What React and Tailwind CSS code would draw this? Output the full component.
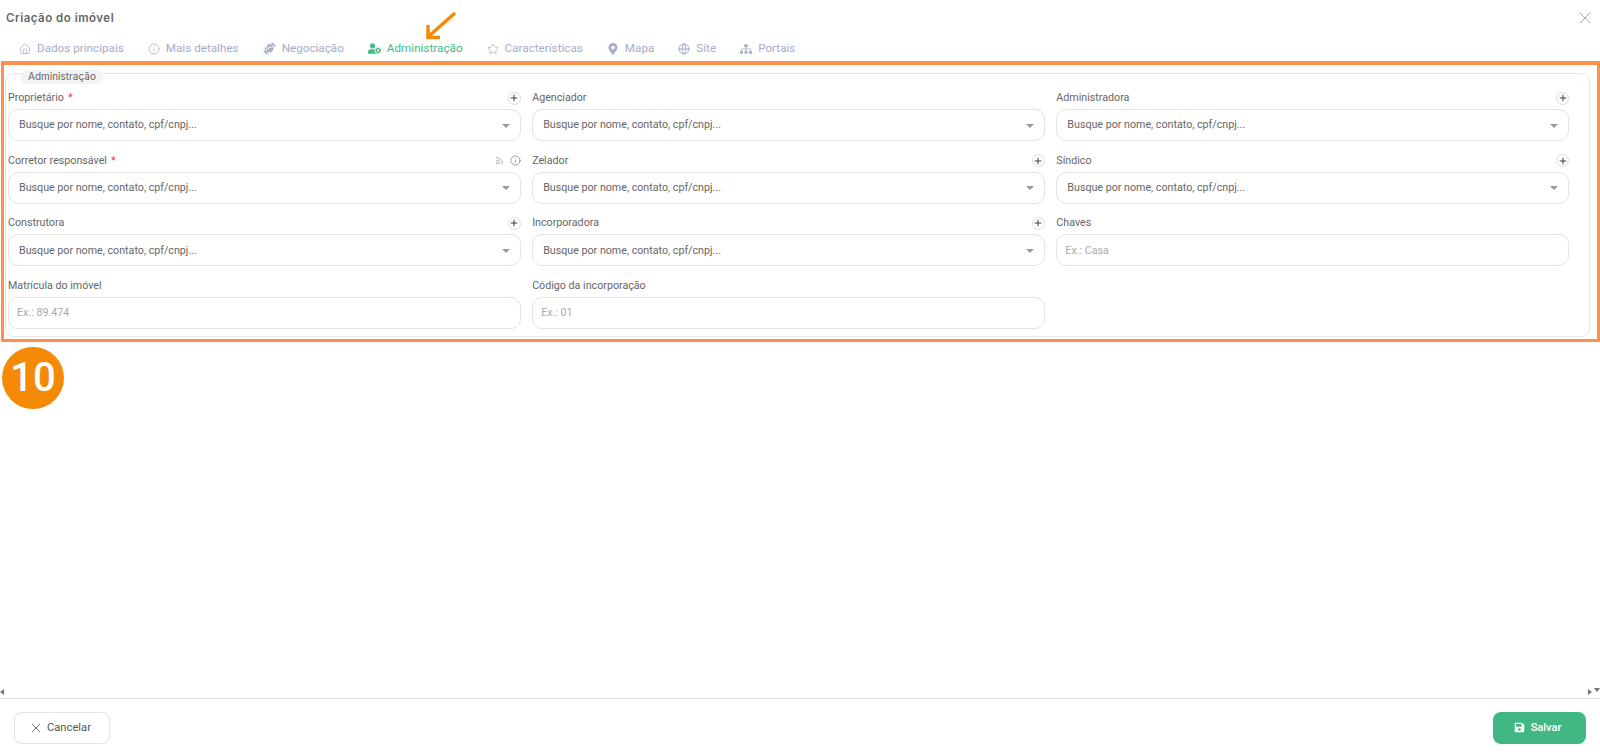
import React from "react";
import { Home, Info, Star, Globe, Plus, Rss, X } from "lucide-react";
import { FaHandshake, FaUserCog, FaMapMarkerAlt, FaSitemap, FaSave } from "react-icons/fa";

const tabs = [
  { label: "Dados principais", icon: <Home className="w-[12px] h-[12px]" strokeWidth={1.5} /> },
  { label: "Mais detalhes", icon: <Info className="w-[12px] h-[12px]" strokeWidth={1.5} /> },
  { label: "Negociação", icon: <FaHandshake className="w-[13px] h-[13px] -rotate-45" /> },
  { label: "Administração", icon: <FaUserCog className="w-[13px] h-[13px]" />, active: true },
  { label: "Características", icon: <Star className="w-[12px] h-[12px]" strokeWidth={1.5} /> },
  { label: "Mapa", icon: <FaMapMarkerAlt className="w-[12px] h-[12px]" /> },
  { label: "Site", icon: <Globe className="w-[12px] h-[12px]" strokeWidth={2} /> },
  { label: "Portais", icon: <FaSitemap className="w-[12px] h-[12px]" /> },
];

const search = "Busque por nome, contato, cpf/cnpj...";

const fields = [
  { label: "Proprietário", required: true, add: true, text: search },
  { label: "Agenciador", text: search },
  { label: "Administradora", add: true, text: search },
  { label: "Corretor responsável", required: true, extra: true, text: search },
  { label: "Zelador", add: true, text: search },
  { label: "Síndico", add: true, text: search },
  { label: "Construtora", add: true, text: search },
  { label: "Incorporadora", add: true, text: search },
  { label: "Chaves", placeholder: "Ex.: Casa" },
  { label: "Matrícula do imóvel", placeholder: "Ex.: 89.474" },
  { label: "Código da incorporação", placeholder: "Ex.: 01" },
];

function Field({ field }) {
  return (
    <div>
      <div className="h-[15px] mb-[4px] pt-[1px] flex items-center justify-between text-[10.7px] text-[#666]">
        <span>
          {field.label}
          {field.required && <span className="text-[#e6305f] ml-[4px]">*</span>}
        </span>
        {field.add && (
          <span className="w-[13px] h-[13px] rounded-full border border-[#dcdcdc] flex items-center justify-center text-[#333]">
            <Plus className="w-[10px] h-[10px]" strokeWidth={2.25} />
          </span>
        )}
        {field.extra && (
          <span className="flex items-center gap-[6px] text-[#777]">
            <Rss className="w-[9px] h-[9px]" strokeWidth={1.5} />
            <Info className="w-[11px] h-[11px]" strokeWidth={1.5} />
          </span>
        )}
      </div>
      <div className="h-[32px] pt-[1px] rounded-[10px] border border-[#e3e3e3] bg-white flex items-center justify-between text-[10.7px]">
        {field.text ? (
          <>
            <span className="pl-[10px] text-[#666]">{field.text}</span>
            <span className="mr-[10px] w-0 h-0 border-x-[4px] border-x-transparent border-t-[4px] border-t-[#999]" />
          </>
        ) : (
          <span className="pl-[8px] text-[#aaa]">{field.placeholder}</span>
        )}
      </div>
    </div>
  );
}

export default function App() {
  return (
    <div className="relative h-screen flex flex-col bg-white overflow-hidden font-['Roboto',sans-serif]">
      {/* Header */}
      <div className="h-[34px] pt-[1px] pl-[6px] pr-[5px] flex items-center justify-between shrink-0">
        <h1 className="pt-[2px] text-[11.5px] font-semibold tracking-[0.5px] text-[#666] font-['Inter',sans-serif]">Criação do imóvel</h1>
        <X className="w-[20px] h-[20px] text-[#999]" strokeWidth={1} />
      </div>

      {/* Tabs */}
      <div className="h-[27px] pt-[3px] pl-[19px] flex items-center gap-[24px] shrink-0">
        {tabs.map((tab) => (
          <div
            key={tab.label}
            className={`flex items-center gap-[6px] text-[11.7px] ${tab.active ? "text-[#43b985]" : "text-[#a9acc4]"}`}
          >
            {tab.icon}
            {tab.label}
          </div>
        ))}
      </div>

      {/* Area marcada */}
      <div className="ml-[1px] h-[281px] border-[3px] border-t-[4px] border-[#ff8f4d] shrink-0 pt-[8px] pl-[1px] pr-[7px] pb-[2px]">
        <div className="relative h-full rounded-[8px] border border-[#e6e6e6] pt-[16px] pl-[2px] pr-[20px]">
          <span className="absolute left-[15px] -top-[4px] h-[14px] px-[7px] rounded-full bg-[#f3f3f3] text-[10px] leading-[13px] text-[#666] font-['Inter',sans-serif]">
            Administração
          </span>
          <div className="grid grid-cols-3 gap-x-[11.5px] gap-y-[11.6px]">
            {fields.map((field) => (
              <Field key={field.label} field={field} />
            ))}
          </div>
        </div>
      </div>

      {/* Numero */}
      <div className="ml-[2px] mt-[5px] w-[62px] h-[62px] rounded-full bg-[#f58a07] flex items-center justify-center text-[40px] font-medium text-white shrink-0">
        10
      </div>

      <div className="flex-1 flex items-end justify-between relative">
        <span className="mb-[3px] w-0 h-0 border-y-[3px] border-y-transparent border-r-[4px] border-r-[#777]" />
        <span className="mb-[3px] mr-[8px] w-0 h-0 border-y-[3px] border-y-transparent border-l-[4px] border-l-[#777]" />
        <span className="absolute right-0 bottom-[6px] w-0 h-0 border-x-[3px] border-x-transparent border-t-[4px] border-t-[#777]" />
      </div>

      {/* Footer */}
      <div className="h-[58px] border-t border-[#e2e2e2] px-[14px] flex items-center justify-between shrink-0">
        <button className="h-[32px] w-[96px] pl-[14px] rounded-[8px] border border-[#e3e3e3] bg-white flex items-center gap-[4px] text-[11.2px] text-[#555]">
          <X className="w-[14px] h-[14px]" strokeWidth={1.5} />
          <span className="pt-[1px]">Cancelar</span>
        </button>
        <button className="h-[32px] w-[93px] pr-[4px] rounded-[8px] bg-[#41b883] flex items-center justify-center gap-[6px] text-[11px] font-medium text-white">
          <FaSave className="w-[11px] h-[11px]" />
          <span className="pt-[1px]">Salvar</span>
        </button>
      </div>

      {/* Seta */}
      <svg className="absolute left-[424px] top-[10px]" width="34" height="30" viewBox="0 0 34 30" fill="none" stroke="#f58a07" strokeWidth="3.5">
        <path d="M31 3 L5 26" />
        <path d="M4 15 L4 27.5 L16 27.5" />
      </svg>
    </div>
  );
}
